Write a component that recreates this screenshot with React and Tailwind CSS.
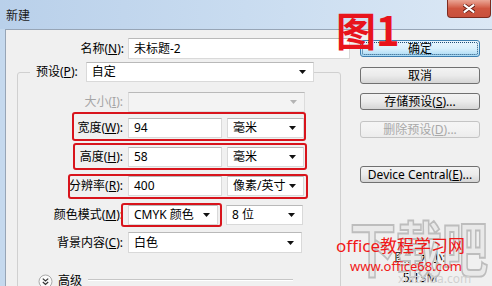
import React from 'react';

const font = "font-['Noto_Sans','Noto_Sans_CJK_SC',sans-serif]";

function Arrow({ disabled }) {
  return (
    <svg width="7" height="4" viewBox="0 0 7 4" className="shrink-0">
      <path d="M0 0H7L3.5 4Z" fill={disabled ? '#b4b4b4' : '#111'} />
    </svg>
  );
}

function Field({ value, className = '', select, disabled }) {
  return (
    <div
      className={`flex items-center border border-[#d9d9d9] border-t-[#b9b9b9] pl-[5px] pr-[7px] leading-none ${
        disabled ? 'bg-[#f3f3f3]' : 'bg-white'
      } ${className}`}
    >
      <span className="flex-1 whitespace-nowrap">{value}</span>
      {select && <Arrow disabled={disabled} />}
    </div>
  );
}

function Label({ children, disabled }) {
  return (
    <div className={`w-[105px] shrink-0 text-right whitespace-nowrap ${disabled ? 'text-[#a5a5a5]' : ''}`}>
      {children}
    </div>
  );
}

function Mark({ className }) {
  return <div className={`absolute border-2 border-[#d8141c] rounded-[3px] pointer-events-none ${className}`} />;
}

function Button({ children, primary, disabled, className = '' }) {
  let look = 'border-[#707070] from-[#f3f3f3] via-[#ebebeb] to-[#d5d5d5]';
  if (primary) look = 'border-[#3c7fb1] from-[#eaf6fd] via-[#d9f0fc] to-[#a9daf5]';
  if (disabled) look = 'border-[#c4c4c4] from-[#f5f5f5] via-[#f2f2f2] to-[#ececec] text-[#a8a8a8]';
  return (
    <div
      className={`relative w-[120px] h-[17px] rounded-[3px] border bg-linear-to-b flex items-center justify-center leading-none whitespace-nowrap ${look} ${className}`}
    >
      {primary && <div className="absolute inset-[1px] border border-dotted border-[#1d4f78] rounded-[2px]" />}
      <span className="relative">{children}</span>
    </div>
  );
}

export default function App() {
  return (
    <div className={`relative w-[492px] h-[286px] overflow-hidden bg-[#c7daee] text-[12px] text-black ${font}`}>
      {/* title bar */}
      <div className="h-[29px] flex items-start bg-linear-to-r from-[#b9d0ea] via-[#c9dcf0] to-[#dbe8f5]">
        <div className="pl-[6px] pt-[10px] leading-none text-[#1a1a1a]">新建</div>
        <div className="ml-auto mr-[1px] w-[44px] h-[18px] rounded-b-[4px] border border-t-0 border-[#7d2b1f] bg-linear-to-b from-[#eaa696] via-[#cf5640] to-[#c8503c] flex items-center justify-center">
          <svg width="12" height="9" viewBox="0 0 12 9">
            <path d="M1 1L11 8M11 1L1 8" stroke="#6b1e14" strokeWidth="4" strokeLinecap="round" />
            <path d="M1.5 1.2L10.5 7.8M10.5 1.2L1.5 7.8" stroke="#fff" strokeWidth="2.2" strokeLinecap="round" />
          </svg>
        </div>
      </div>

      {/* body */}
      <div className="flex h-[257px]">
        <div className="w-[5px] shrink-0 bg-[#c5d9ee]" />
        <div className="flex-1 flex bg-[#f0f0f0] border-l border-t border-[#97a5b6]">
          {/* left column */}
          <div className="w-[347px] shrink-0">
            <div className="flex items-center gap-[4px] mt-[8px] h-[21px]">
              <div className="w-[118px] text-right">名称(<u>N</u>):</div>
              <Field value="未标题-2" className="w-[222px] h-[21px]" />
            </div>

            <div className="ml-[11px] mt-[13px] w-[324px] h-[230px] border border-[#d0d0d0] rounded-[3px]">
              <div className="flex items-center -mt-[11px] ml-[12px] h-[20px]">
                <span className="bg-[#f0f0f0] pl-[6px] pr-[8px]">预设(<u>P</u>):</span>
                <Field value="自定" select className="w-[228px] h-[20px]" />
              </div>

              <div className="flex items-center gap-[5px] mt-[10px] h-[20px]">
                <Label disabled>大小(<u>I</u>):</Label>
                <Field value="" select disabled className="w-[177px] h-[20px] border-[#dcdcdc]" />
              </div>

              <div className="relative flex items-center gap-[5px] mt-[6px] h-[20px]">
                <Label>宽度(<u>W</u>):</Label>
                <Field value="94" className="w-[94px] h-[20px]" />
                <Field value="毫米" select className="w-[77px] h-[20px]" />
                <Mark className="top-[-6px] left-[54px] w-[234px] h-[29px]" />
              </div>

              <div className="relative flex items-center gap-[5px] mt-[9px] h-[20px]">
                <Label>高度(<u>H</u>):</Label>
                <Field value="58" className="w-[94px] h-[20px]" />
                <Field value="毫米" select className="w-[77px] h-[20px]" />
                <Mark className="top-[-4px] left-[55px] w-[234px] h-[27px]" />
              </div>

              <div className="relative flex items-center gap-[5px] mt-[9px] h-[20px]">
                <Label>分辨率(<u>R</u>):</Label>
                <Field value="400" className="w-[94px] h-[20px]" />
                <Field value="像素/英寸" select className="w-[77px] h-[20px]" />
                <Mark className="top-[-2px] left-[50px] w-[240px] h-[25px]" />
              </div>

              <div className="relative flex items-center gap-[5px] mt-[9px] h-[20px]">
                <Label>颜色模式(<u>M</u>):</Label>
                <Field value="CMYK 颜色" select className="w-[90px] h-[20px]" />
                <Field value="8 位" select className="w-[77px] h-[20px] ml-[3px]" />
                <Mark className="top-[-2px] left-[103px] w-[101px] h-[24px]" />
              </div>

              <div className="flex items-center gap-[5px] mt-[7px] h-[21px]">
                <Label>背景内容(<u>C</u>):</Label>
                <Field value="白色" select className="w-[174px] h-[21px]" />
              </div>

              <div className="flex items-center mt-[20px] ml-[20px] mr-[47px] h-[16px]">
                <svg width="15" height="15" viewBox="0 0 15 15" className="shrink-0">
                  <circle cx="7.5" cy="7.5" r="6.5" fill="#fafafa" stroke="#a9a9a9" />
                  <path d="M4.8 4.6L7.5 7L10.2 4.6M4.8 8L7.5 10.4L10.2 8" fill="none" stroke="#333" strokeWidth="1.2" />
                </svg>
                <span className="ml-[5px]">高级</span>
                <div className="flex-1 ml-[6px] -mt-[2px] h-[2px] border-t border-[#c6c6c6] border-b border-b-white" />
              </div>
            </div>
          </div>

          {/* right column */}
          <div className="flex-1 pl-[7px] flex flex-col">
            <Button primary className="mt-[10px]">确定</Button>
            <Button className="mt-[10px]">取消</Button>
            <Button className="mt-[9px]">存储预设(<u>S</u>)...</Button>
            <Button disabled className="mt-[11px]">删除预设(<u>D</u>)...</Button>
            <Button className="mt-[28px]">Device Central(<u>E</u>)...</Button>
            <div className="w-[120px] mt-[69px] text-center leading-none">图像大小:</div>
            <div className="w-[120px] mt-[8px] text-center leading-none">5.13M</div>
          </div>
        </div>
      </div>

      {/* annotations and watermarks */}
      <div className="absolute left-[350px] top-[216px] origin-top scale-y-[1.3] text-[46px] leading-none font-bold text-[#e9e9e9] [-webkit-text-stroke:1.5px_#bdbdbd] font-['Noto_Sans_CJK_SC',sans-serif] whitespace-nowrap">
        下载吧
      </div>
      <div className="absolute left-[398px] top-[273px] text-[12px] leading-none text-[#d0d0d0] whitespace-nowrap">xiazaiba.com</div>
      <div className="absolute left-[336px] top-[9px] text-[40px] leading-none font-bold text-[#e8141c] font-['Noto_Sans_CJK_SC',sans-serif] whitespace-nowrap">
        图1
      </div>
      <div className="absolute left-[336px] top-[237px] text-[17px] leading-none text-[#f01818] whitespace-nowrap">
        office教程学习网
      </div>
      <div className="absolute left-[350px] top-[260px] text-[13px] leading-none text-[#f01818] whitespace-nowrap">
        www.office68.com
      </div>
    </div>
  );
}
